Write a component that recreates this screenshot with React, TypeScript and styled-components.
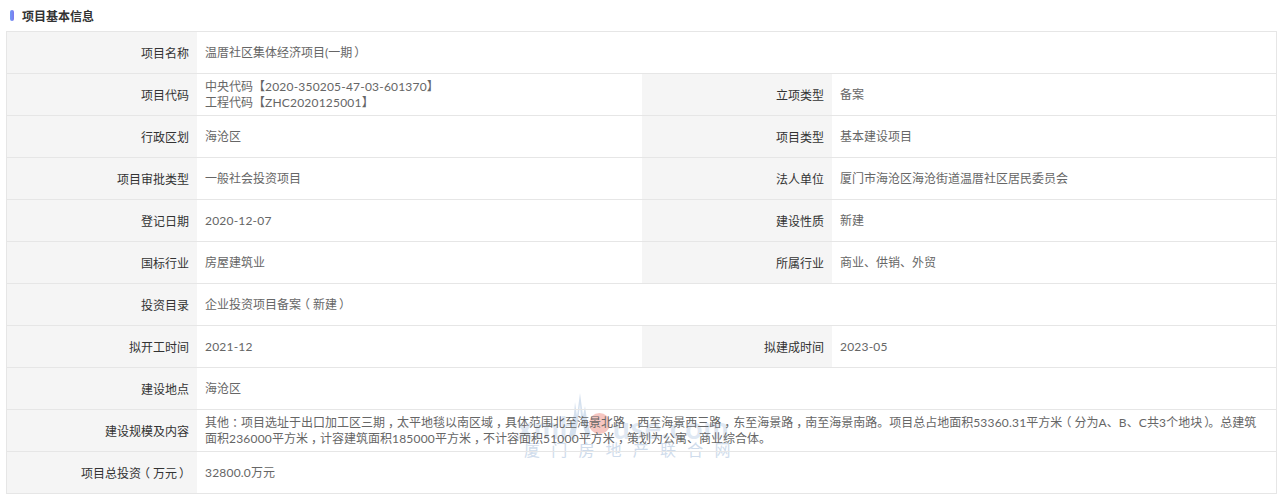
import React from "react";
import styled, { createGlobalStyle } from "styled-components";

const GlobalStyle = createGlobalStyle`
  html, body {
    margin: 0;
    padding: 0;
    background: #fff;
  }
  body {
    font-family: Lato, "Noto Sans CJK SC", sans-serif;
  }
`;

const Page = styled.div`
  position: relative;
  isolation: isolate;
  width: 1285px;
  height: 502px;
  overflow: hidden;
  padding: 0 8px 0 6px;
  box-sizing: border-box;
`;

const Heading = styled.h3`
  display: flex;
  align-items: center;
  height: 31px;
  margin: 0;
  padding: 0 0 1px 4px;
  box-sizing: border-box;
  font-size: 12px;
  font-weight: bold;
  color: #333;
  &::before {
    content: "";
    width: 4px;
    height: 11px;
    margin-right: 8px;
    border-radius: 2px;
    background: linear-gradient(90deg, #6f9bf5, #7d79ee);
  }
`;

const Table = styled.div`
  display: grid;
  grid-template-columns: 190px 445px 190px 1fr;
  border: 1px solid #e6e6e6;
  border-bottom: 0;
`;

const Label = styled.div`
  display: flex;
  align-items: center;
  justify-content: flex-end;
  height: 41px;
  padding-right: 8px;
  font-size: 12px;
  color: #333;
  background: #f5f5f5;
  border-bottom: 1px solid #e6e6e6;
`;

const Value = styled.div<{ $wide?: boolean }>`
  display: flex;
  align-items: center;
  height: 41px;
  padding: 0 ${(p) => (p.$wide ? "16px" : "8px")} 0 8px;
  font-size: 12px;
  line-height: 16px;
  color: #666;
  border-bottom: 1px solid #e6e6e6;
  grid-column: ${(p) => (p.$wide ? "span 3" : "auto")};
`;

const ValueText = styled.div`
  flex: 1;
  min-width: 0;
  white-space: pre-line;
`;

// Fullwidth punctuation sits nearer the middle of its box in the original font
const Punct = styled.span<{ $shift: number }>`
  margin-left: ${(p) => p.$shift}px;
  margin-right: ${(p) => -p.$shift}px;
`;

// Codes and numbers run slightly wider in the original font
const Latin = styled.span`
  letter-spacing: 0.2px;
`;

const Watermark = styled.div`
  position: absolute;
  left: 517px;
  top: 414px;
  display: flex;
  flex-direction: column;
  align-items: flex-start;
  width: 225px;
  pointer-events: none;
  z-index: -1;
`;

const DomainRow = styled.div`
  display: flex;
  align-items: center;
  height: 25px;
  font-size: 30px;
  font-weight: bold;
  letter-spacing: 1px;
  color: #dfe8f3;
  white-space: nowrap;
`;

const Sun = styled.span`
  flex: none;
  width: 21px;
  height: 21px;
  margin: 0 3px 6px 11px;
  border-radius: 50%;
  background: #f6c6c1;
`;

const Spires = styled.svg`
  position: absolute;
  left: 48px;
  top: -24px;
`;

const SiteName = styled.div`
  padding-left: 7px;
  white-space: nowrap;
  font-size: 16px;
  line-height: 22px;
  letter-spacing: 11.2px;
  color: #cfdcec;
`;

const shifts: Record<string, number> = { "，": 3, "：": 3, "（": -3, "）": 2 };

const rich = (text: string) =>
  text.split(/([，：（）]|[A-Z0-9.\-]+)/).map((part, i) =>
    shifts[part] ? (
      <Punct key={i} $shift={shifts[part]}>
        {part}
      </Punct>
    ) : /^[A-Z0-9.\-]+$/.test(part) ? (
      <Latin key={i}>{part}</Latin>
    ) : (
      part
    )
  );

const rows: [string, string, string?, string?][] = [
  ["项目名称", "温厝社区集体经济项目(一期）"],
  ["项目代码", "中央代码【2020-350205-47-03-601370】\n工程代码【ZHC2020125001】", "立项类型", "备案"],
  ["行政区划", "海沧区", "项目类型", "基本建设项目"],
  ["项目审批类型", "一般社会投资项目", "法人单位", "厦门市海沧区海沧街道温厝社区居民委员会"],
  ["登记日期", "2020-12-07", "建设性质", "新建"],
  ["国标行业", "房屋建筑业", "所属行业", "商业、供销、外贸"],
  ["投资目录", "企业投资项目备案（新建）"],
  ["拟开工时间", "2021-12", "拟建成时间", "2023-05"],
  ["建设地点", "海沧区"],
  [
    "建设规模及内容",
    "其他：项目选址于出口加工区三期，太平地毯以南区域，具体范围北至海景北路，西至海景西三路，东至海景路，南至海景南路。项目总占地面积53360.31平方米（分为A、B、C共3个地块）。总建筑面积236000平方米，计容建筑面积185000平方米，不计容面积51000平方米，策划为公寓、商业综合体。",
  ],
  ["项目总投资（万元）", "32800.0万元"],
];

export default function App() {
  return (
    <Page>
      <GlobalStyle />
      <Heading>项目基本信息</Heading>
      <Table>
        {rows.map(([label, value, label2, value2]) => (
          <React.Fragment key={label}>
            <Label>{rich(label)}</Label>
            <Value $wide={!label2}>
              <ValueText>{rich(value)}</ValueText>
            </Value>
            {label2 && <Label>{label2}</Label>}
            {label2 && (
              <Value>
                <ValueText>{rich(value2 ?? "")}</ValueText>
              </Value>
            )}
          </React.Fragment>
        ))}
      </Table>
      <Watermark>
        <DomainRow>
          xmh
          <Sun />
          use.com
        </DomainRow>
        <SiteName>厦门房地产联合网</SiteName>
        <Spires width="30" height="46" viewBox="0 0 30 46">
          <path d="M4 46 L9 24 L10 12 L12 26 L15 3 L18 26 L20 16 L22 30 L26 46 L21 46 L16 28 L15 14 L13 32 L10 46 Z" fill="#d5e1ef" />
        </Spires>
      </Watermark>
    </Page>
  );
}
